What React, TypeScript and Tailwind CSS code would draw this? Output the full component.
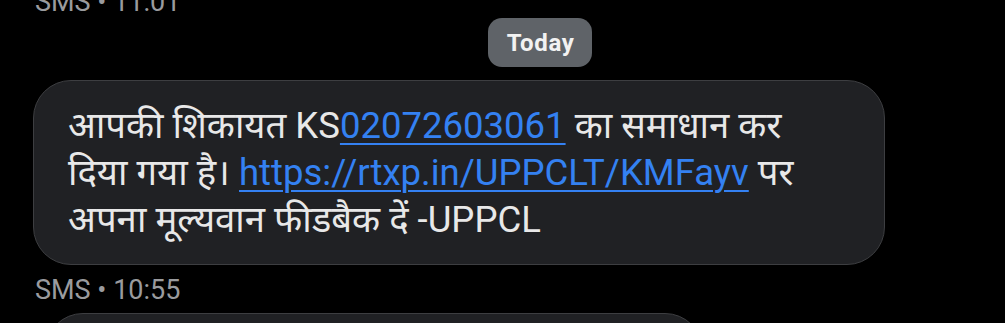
import React from "react";

const Meta = ({ label, className }: { label: string; className?: string }) => (
    <p className={`pl-[35px] text-[27px] leading-[32px] text-[#9a9b9e] ${className ?? ""}`}>{label}</p>
);

const Link = ({ children }: { children: React.ReactNode }) => (
    <span className="text-[#3481f2] underline decoration-[2px] underline-offset-[5px]">{children}</span>
);

const App = () => {
    return (
        <div
            className="h-[323px] w-[1005px] overflow-hidden bg-black"
            style={{ fontFamily: "Roboto, 'Noto Sans Devanagari', 'Noto Sans', sans-serif" }}
        >
            <Meta label="SMS • 11:01" className="-mt-[14px]" />

            <div className="flex justify-center pl-[75px]">
                <div className="flex h-[49px] w-[104px] items-center justify-center rounded-[14px] bg-[#5f6368] pl-[1px] text-[24px] font-bold tracking-[0.6px] text-[#f2f2f2]">
                    Today
                </div>
            </div>

            <div className="ml-[33px] mt-[13px] w-[852px] rounded-[38px] border border-[#3d3e41] bg-[#202124] px-[34px] pb-[21px] pt-[21px] text-[36.5px] leading-[47px] text-[#e8e8e8]">
                आपकी शिकायत KS<Link>02072603061</Link> का समाधान कर
                <br />
                दिया गया है। <Link>https://rtxp.in/UPPCLT/KMFayv</Link> पर
                <br />
                अपना मूल्यवान फीडबैक दें -UPPCL
            </div>

            <Meta label="SMS • 10:55" className="mt-[9px]" />

            <div className="ml-[45px] mt-[7px] h-[80px] w-[658px] rounded-[38px] border border-[#3d3e41] bg-[#202124]" />
        </div>
    );
};

export default App;
